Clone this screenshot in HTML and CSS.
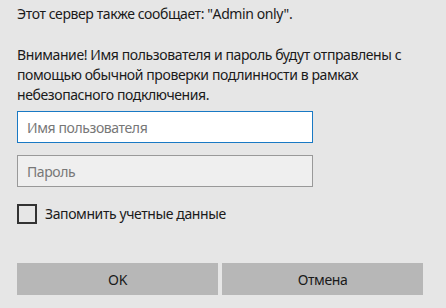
FILE: index.html
```html
<!DOCTYPE html>
<html lang="ru">
<head>
    <meta charset="UTF-8">
    <meta name="viewport" content="width=device-width, initial-scale=1.0">
    <title>Вход</title>
    <link rel="stylesheet" href="styles.css">
</head>
<body>
    <div class="dialog">
        <p class="message">Этот сервер также сообщает: "Admin only".</p>
        <p class="warning">Внимание! Имя пользователя и пароль будут отправлены с помощью обычной проверки подлинности в рамках небезопасного подключения.</p>

        <div class="fields">
            <input type="text" class="field field-active" placeholder="Имя пользователя">
            <input type="password" class="field" placeholder="Пароль">
        </div>

        <label class="remember">
            <span class="checkbox"></span>
            <span>Запомнить учетные данные</span>
        </label>

        <div class="buttons">
            <button class="btn">OK</button>
            <button class="btn">Отмена</button>
        </div>
    </div>
</body>
</html>
```

FILE: styles.css
```css
html, body {
    height: 100%;
}
body {
    margin: 0;
    background: #e6e6e6;
    color: #1a1a1a;
    font-family: 'Noto Sans', 'Open Sans', sans-serif;
    font-size: 14px;
    line-height: 20px;
    letter-spacing: -0.4px;
}
.dialog {
    padding: 4px 23px 0 17px;
}
.message {
    margin: 0 0 21px 0;
}
.warning {
    margin: 0;
    width: 400px;
}
.fields {
    display: flex;
    flex-direction: column;
    gap: 12px;
    margin-top: 6px;
    width: 296px;
}
.field {
    box-sizing: border-box;
    height: 32px;
    padding: 0 9px;
    border: 1px solid #999999;
    background: #efefef;
    font-family: inherit;
    font-size: 14px;
    letter-spacing: -0.4px;
    color: #1a1a1a;
    outline: none;
}
.field::placeholder {
    color: #777777;
}
.field-active {
    border-color: #1979c4;
    background: #ffffff;
}
.remember {
    display: flex;
    align-items: center;
    gap: 8px;
    margin-top: 16px;
    height: 22px;
}
.checkbox {
    box-sizing: border-box;
    width: 20px;
    height: 20px;
    border: 2px solid #333333;
}
.buttons {
    display: flex;
    gap: 4px;
    margin-top: 38px;
}
.btn {
    flex: 1;
    height: 32px;
    border: none;
    background: #b7b7b7;
    color: #1a1a1a;
    font-family: inherit;
    font-size: 14px;
    letter-spacing: -0.4px;
}
```
